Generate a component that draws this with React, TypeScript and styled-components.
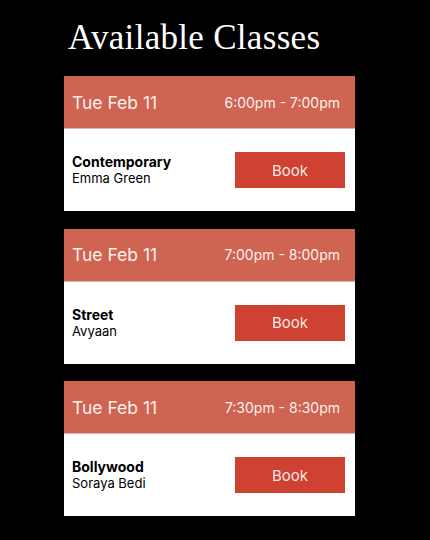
import React from "react";
import styled, { createGlobalStyle } from "styled-components";

const Global = createGlobalStyle`
  html, body { margin: 0; padding: 0; background: #000; }
  body { font-family: Inter, "Noto Sans", sans-serif; }
`;

const Page = styled.div`
  width: 430px;
  height: 540px;
  background: #000;
  padding: 16px 0 0 64px;
  box-sizing: border-box;
  display: flex;
  flex-direction: column;
`;

const Title = styled.h1`
  margin: 0 0 0 4px;
  font-family: "Liberation Serif", "Times New Roman", serif;
  font-weight: 400;
  font-size: 35px;
  line-height: 44px;
  color: #fff;
  letter-spacing: 0.3px;
`;

const List = styled.div`
  margin-top: 16px;
  width: 291px;
  display: flex;
  flex-direction: column;
  gap: 17.5px;
`;

const Card = styled.div`
  background: #fff;
  display: flex;
  flex-direction: column;
`;

const Header = styled.div`
  height: 52px;
  background: #d06452;
  border-bottom: 1px solid #d9b8b2;
  display: flex;
  align-items: center;
  justify-content: space-between;
  padding: 0 15px 0 8px;
  color: rgba(255, 255, 255, 0.93);
`;

const DateText = styled.span`
  font-size: 17.5px;
  font-weight: 400;
`;

const TimeText = styled.span`
  font-size: 14px;
  font-weight: 400;
`;

const Body = styled.div`
  height: 82px;
  display: flex;
  align-items: center;
  justify-content: space-between;
  padding: 0 10px 0 8px;
`;

const Info = styled.div`
  display: flex;
  flex-direction: column;
`;

const Name = styled.span`
  font-size: 14px;
  font-weight: 700;
  line-height: 17px;
  color: #000;
`;

const Teacher = styled.span`
  font-size: 13px;
  line-height: 17px;
  color: #000;
`;

const BookButton = styled.button`
  width: 110px;
  height: 36px;
  border: none;
  background: #cf4131;
  color: rgba(255, 255, 255, 0.9);
  font-family: Inter, "Noto Sans", sans-serif;
  font-size: 15px;
  font-weight: 400;
  padding: 0;
  cursor: pointer;
`;

const classes = [
  { date: "Tue Feb 11", time: "6:00pm - 7:00pm", name: "Contemporary", teacher: "Emma Green" },
  { date: "Tue Feb 11", time: "7:00pm - 8:00pm", name: "Street", teacher: "Avyaan" },
  { date: "Tue Feb 11", time: "7:30pm - 8:30pm", name: "Bollywood", teacher: "Soraya Bedi" },
];

export default function App() {
  return (
    <>
      <Global />
      <Page>
        <Title>Available Classes</Title>
        <List>
          {classes.map((c, i) => (
            <Card key={i}>
              <Header>
                <DateText>{c.date}</DateText>
                <TimeText>{c.time}</TimeText>
              </Header>
              <Body>
                <Info>
                  <Name>{c.name}</Name>
                  <Teacher>{c.teacher}</Teacher>
                </Info>
                <BookButton>Book</BookButton>
              </Body>
            </Card>
          ))}
        </List>
      </Page>
    </>
  );
}
